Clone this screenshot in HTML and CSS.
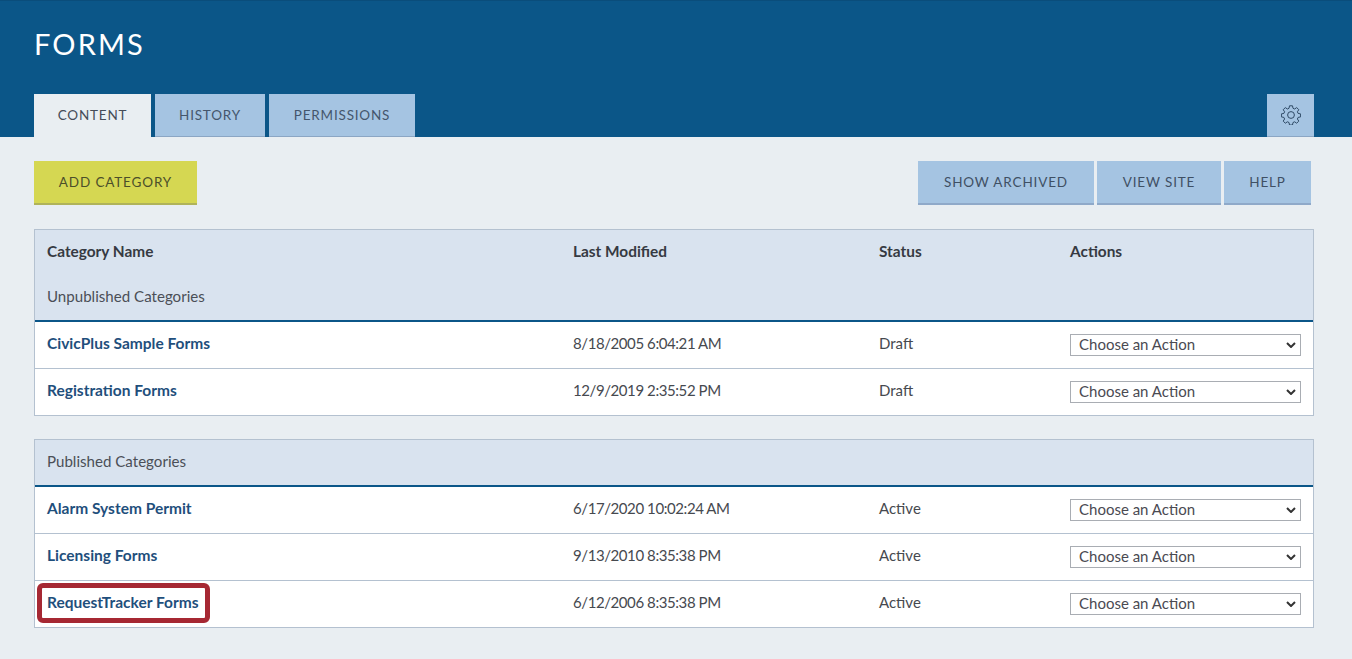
FILE: index.html
```html
<!DOCTYPE html>
<html lang="en">
<head>
<meta charset="utf-8">
<title>Forms</title>
<link rel="stylesheet" href="styles.css">
</head>
<body>
<header class="masthead">
  <h1 class="title">FORMS</h1>
  <nav class="tabs">
    <a class="tab tab-active">CONTENT</a>
    <a class="tab">HISTORY</a>
    <a class="tab">PERMISSIONS</a>
    <a class="tab tab-gear" aria-label="Settings">
      <svg class="gear" viewBox="0 0 20 20" width="20" height="20" fill="none" stroke="#2f4a66" stroke-width="1" stroke-linejoin="round">
        <path d="M8.5 .8h3l.5 2.5 1.6.7 2.1-1.4 2.1 2.1-1.4 2.1.7 1.6 2.5.5v3l-2.5.5-.7 1.6 1.4 2.1-2.1 2.1-2.1-1.4-1.6.7-.5 2.5h-3l-.5-2.5-1.6-.7-2.1 1.4-2.1-2.1 1.4-2.1-.7-1.6-2.5-.5v-3l2.5-.5.7-1.6-1.4-2.1 2.1-2.1 2.1 1.4 1.6-.7z"/>
        <circle cx="10" cy="10" r="3.4"/>
      </svg>
    </a>
  </nav>
</header>
<main class="content">
  <div class="toolbar">
    <a class="btn btn-add">ADD CATEGORY</a>
    <div class="toolbar-right">
      <a class="btn btn-archived">SHOW ARCHIVED</a>
      <a class="btn btn-site">VIEW SITE</a>
      <a class="btn btn-help">HELP</a>
    </div>
  </div>
  <table class="grid">
    <colgroup><col class="c1"><col class="c2"><col class="c3"><col class="c4"></colgroup>
    <thead>
      <tr class="columns"><th>Category Name</th><th>Last Modified</th><th>Status</th><th>Actions</th></tr>
      <tr class="group"><td colspan="4">Unpublished Categories</td></tr>
    </thead>
    <tbody>
      <tr><td><a class="name">CivicPlus Sample Forms</a></td><td class="date">8/18/2005 6:04:21 AM</td><td>Draft</td><td><select class="action"><option>Choose an Action</option></select></td></tr>
      <tr><td><a class="name">Registration Forms</a></td><td class="date">12/9/2019 2:35:52 PM</td><td>Draft</td><td><select class="action"><option>Choose an Action</option></select></td></tr>
    </tbody>
  </table>
  <table class="grid">
    <colgroup><col class="c1"><col class="c2"><col class="c3"><col class="c4"></colgroup>
    <thead>
      <tr class="group"><td colspan="4">Published Categories</td></tr>
    </thead>
    <tbody>
      <tr><td><a class="name">Alarm System Permit</a></td><td class="date">6/17/2020 10:02:24 AM</td><td>Active</td><td><select class="action"><option>Choose an Action</option></select></td></tr>
      <tr><td><a class="name">Licensing Forms</a></td><td class="date">9/13/2010 8:35:38 PM</td><td>Active</td><td><select class="action"><option>Choose an Action</option></select></td></tr>
      <tr><td><a class="name name-marked">RequestTracker Forms</a></td><td class="date">6/12/2006 8:35:38 PM</td><td>Active</td><td><select class="action"><option>Choose an Action</option></select></td></tr>
    </tbody>
  </table>
</main>
</body>
</html>
```
FILE: styles.css
```css
* { box-sizing: border-box; }
html, body { margin: 0; height: 100%; }
body {
  background: #e9eef2;
  font-family: "Lato", "Noto Sans", sans-serif;
  font-size: 15px;
  color: #46494f;
  overflow: hidden;
}
.masthead {
  height: 137px;
  background: #0b5688;
  padding: 0 38px 0 34px;
  display: flex;
  flex-direction: column;
  border-top: 1px solid #0a4d7b;
}
.title {
  margin: 0;
  padding-top: 25px;
  height: 93px;
  font-size: 29px;
  line-height: 36px;
  font-weight: 400;
  letter-spacing: 2.1px;
  color: #fff;
}
.tabs { display: flex; gap: 4px; height: 43px; }
.tab {
  display: flex;
  align-items: center;
  justify-content: center;
  background: #a5c4e2;
  border-bottom: 1px solid #8ba6c4;
  color: #44566c;
  font-size: 13.5px;
  letter-spacing: .8px;
  padding-bottom: 1px;
}
.tab:nth-child(1) { width: 117px; }
.tab:nth-child(2) { width: 110px; }
.tab:nth-child(3) { width: 146px; }
.tab-active { background: #e9eef2; border-bottom: 0; color: #454c58; }
.tab-gear { width: 47px; margin-left: auto; }
.gear { display: block; }
.content { padding: 24px 38px 0 34px; }
.toolbar { display: flex; justify-content: space-between; height: 44px; margin-bottom: 24px; }
.toolbar-right { display: flex; gap: 3px; margin-right: 3px; }
.btn {
  display: flex;
  align-items: center;
  justify-content: center;
  height: 44px;
  padding-bottom: 1px;
  background: #a5c4e2;
  border-bottom: 2px solid #8fa9c9;
  color: #3f5064;
  font-size: 13.5px;
  letter-spacing: .85px;
}
.btn-add { width: 163px; background: #d5d752; border-bottom-color: #b0b35a; color: #4c4f2a; }
.btn-archived { width: 176px; }
.btn-site { width: 124px; }
.btn-help { width: 87px; }
.grid {
  width: 1280px;
  table-layout: fixed;
  border-collapse: separate;
  border-spacing: 0;
  border: 1px solid #b4c1d0;
  margin-bottom: 23px;
  background: #fff;
}
.grid td, .grid th { padding: 0 12px; text-align: left; vertical-align: middle; }
.c1 { width: 526px; }
.c2 { width: 306px; }
.c3 { width: 191px; }
.c4 { width: 255px; }
.columns th {
  height: 45px;
  padding-bottom: 4px;
  background: #d9e3ef;
  font-weight: 700;
  font-size: 15.4px;
  color: #363a42;
}
.group td {
  height: 47px;
  padding-bottom: 4px;
  background: #d9e3ef;
  border-bottom: 2px solid #0b5688;
  color: #4b4f57;
  font-size: 15.1px;
}
.grid tbody td { height: 47px; padding-bottom: 4px; border-bottom: 1px solid #b4c1d0; }
.grid tbody tr:last-child td { height: 46px; border-bottom: 0; }
.date { letter-spacing: -.42px; }
.name {
  position: relative;
  display: inline-block;
  color: #1f4f7c;
  font-weight: 700;
  font-size: 15.5px;
}
.name-marked::after {
  content: "";
  position: absolute;
  left: -10px;
  right: -12px;
  top: -10px;
  bottom: -12px;
  border: 5px solid #a62833;
  border-radius: 6px;
}
.action {
  display: block;
  width: 231px;
  height: 22px;
  margin-top: 4px;
  padding: 0 4px 3px 8px;
  appearance: none;
  background: #fff url("data:image/svg+xml,%3Csvg xmlns='http://www.w3.org/2000/svg' width='10' height='6'%3E%3Cpath d='M1 1l4 4 4-4' fill='none' stroke='%23333' stroke-width='2'/%3E%3C/svg%3E") no-repeat right 4px center;
  border: 1px solid #a9adb3;
  border-radius: 0;
  font-family: inherit;
  font-size: 15px;
  color: #4a4a52;
}
```
